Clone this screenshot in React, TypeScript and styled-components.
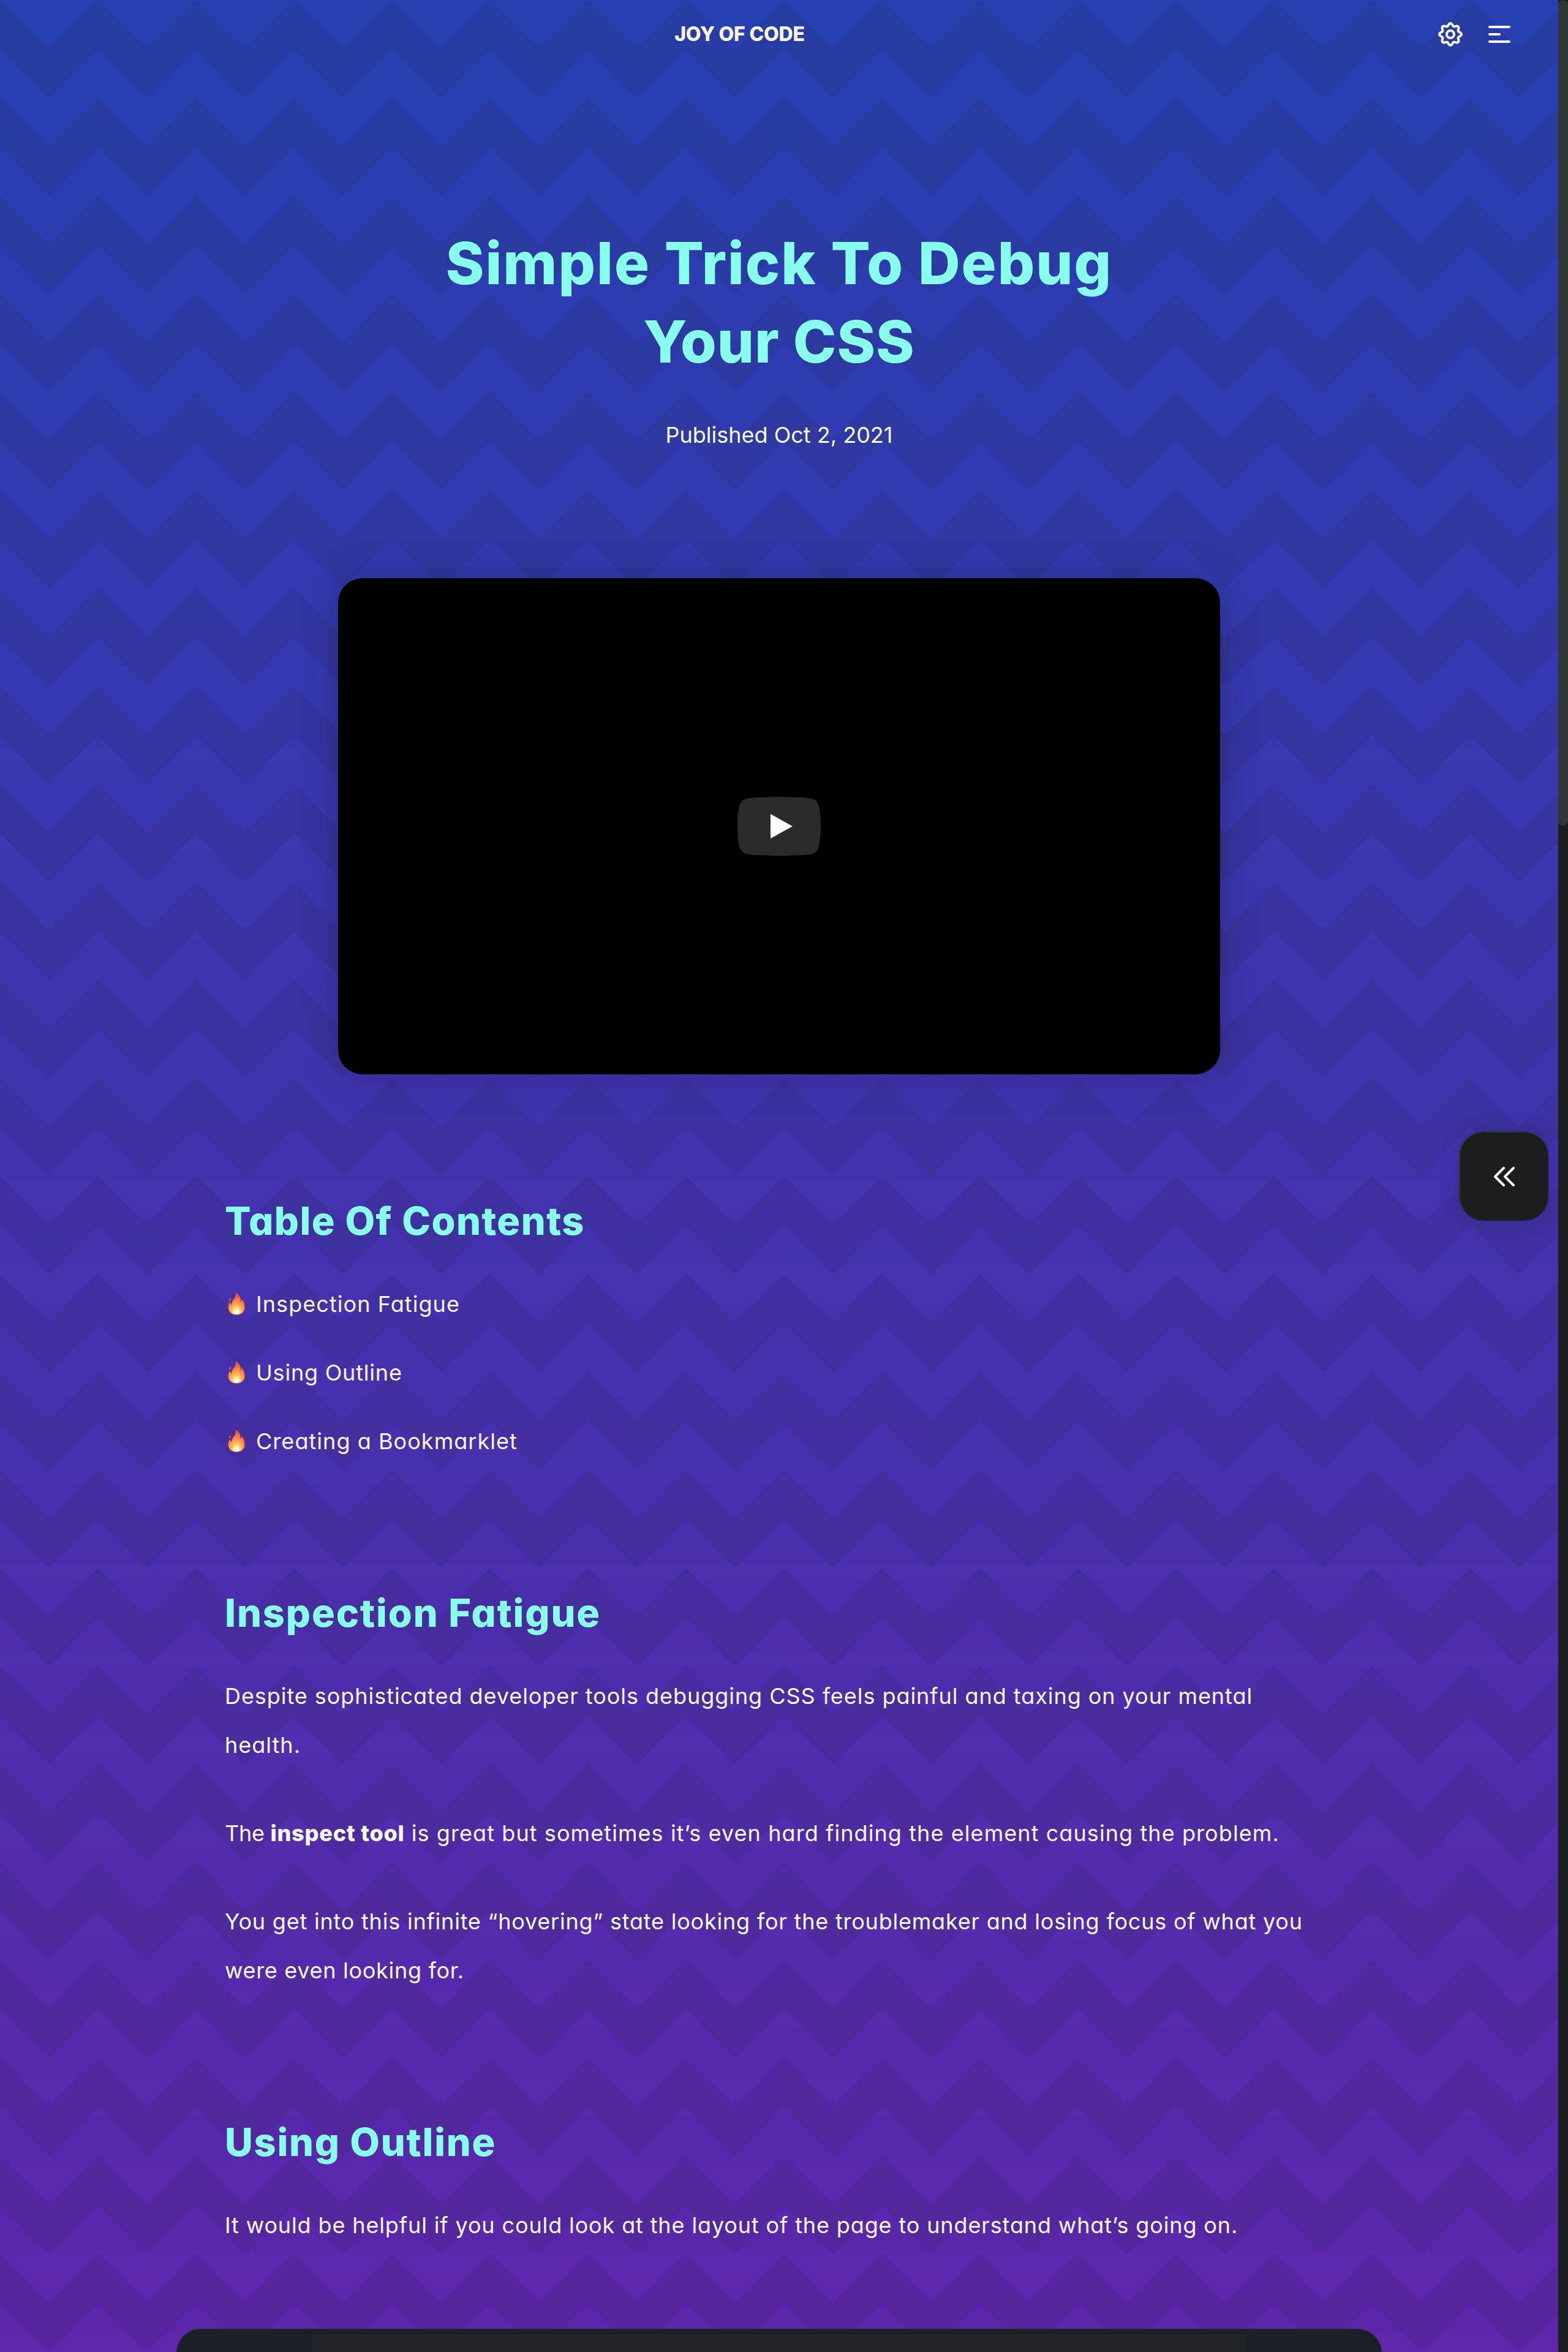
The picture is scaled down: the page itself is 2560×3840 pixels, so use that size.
import React from "react";
import styled, { createGlobalStyle } from "styled-components";

const colors = {
  text: "#fafafa",
  link: "#fff5f5",
  heading: "#88ffec",
  surface: "#1b1d1e",
  code: "#1b1f26",
};

const GlobalStyle = createGlobalStyle`
  *, *::before, *::after { box-sizing: border-box; }
  html, body { margin: 0; padding: 0; }
  body {
    width: 2560px;
    height: 3840px;
    overflow: hidden;
    font-family: Inter, "Open Sans", sans-serif;
    font-feature-settings: "cv11";
    color: ${colors.text};
  }
  h1, h2, p, ul { margin: 0; padding: 0; }
`;

const zigzag = encodeURIComponent(
  '<svg xmlns="http://www.w3.org/2000/svg" width="160" height="160"><path d="M0 0L80 80L160 0V80L80 160L0 80Z" fill="#1b1c1e" fill-opacity="0.1"/></svg>'
);

const Frame = styled.div`
  display: flex;
  width: 2560px;
  height: 3840px;
`;

const Page = styled.div`
  position: relative;
  flex: 1;
  display: flex;
  flex-direction: column;
  overflow: hidden;
  background:
    url("data:image/svg+xml,${zigzag}") 0 0 / 160px 160px,
    linear-gradient(180deg, #2640b1 0%, #5d26ab 100%);

  & > * {
    flex-shrink: 0;
  }
`;

const ScrollTrack = styled.div`
  width: 16px;
  background: ${colors.surface};
`;

const ScrollThumb = styled.div`
  height: 1348px;
  border-radius: 8px;
  background: #2f3736;
`;

const Header = styled.header`
  display: grid;
  grid-template-columns: 1fr auto 1fr;
  align-items: center;
  height: 112px;
  padding: 0 78px 0 0;
`;

const Brand = styled.a`
  grid-column: 2;
  margin-left: -51px;
  color: ${colors.link};
  font-size: 32px;
  font-weight: 800;
  line-height: 48px;
  letter-spacing: -0.2px;
  white-space: nowrap;
`;

const Actions = styled.div`
  display: flex;
  justify-content: flex-end;
  align-items: center;
  gap: 42px;
`;

const Icon = styled.svg`
  display: block;
  fill: none;
  stroke: ${colors.text};
  stroke-width: 4;
  stroke-linecap: round;
  stroke-linejoin: round;
`;

const Hero = styled.section`
  display: flex;
  flex-direction: column;
  align-items: center;
  padding-top: 254px;
  text-align: center;
`;

const Title = styled.h1`
  color: ${colors.heading};
  font-size: 95px;
  font-weight: 800;
  line-height: 128px;
`;

const Line = styled.span<{ $track?: number }>`
  display: block;
  letter-spacing: ${(p) => p.$track ?? 0}px;
  white-space: pre;
`;

const Published = styled.p`
  margin-top: 58px;
  font-size: 36px;
  line-height: 60px;
`;

const Video = styled.div`
  display: flex;
  align-items: center;
  justify-content: center;
  width: 1440px;
  height: 810px;
  margin: 204px auto 0;
  border-radius: 40px;
  background: #000;
  box-shadow: 0 0 64px rgba(0, 0, 0, 0.22);
`;

const Article = styled.main`
  width: 1810px;
  margin: 199px auto 0;
`;

const Section = styled.section`
  margin-bottom: 200px;
`;

const Heading = styled.h2<{ $track: number }>`
  margin-bottom: 56px;
  color: ${colors.heading};
  font-size: 63px;
  font-weight: 800;
  line-height: 80px;
  letter-spacing: ${(p) => p.$track}px;
`;

const Contents = styled.ul`
  display: flex;
  flex-direction: column;
  gap: 32px;
  list-style: none;
`;

const ContentsItem = styled.li`
  display: flex;
  align-items: center;
  gap: 18px;
  color: ${colors.link};
  font-size: 36px;
  line-height: 80px;
`;

const Flame = styled.svg`
  display: block;
  margin-left: 5px;
  margin-bottom: 2px;
`;

const Paragraph = styled.p`
  font-size: 36px;
  line-height: 80px;

  & + & {
    margin-top: 64px;
  }
`;

const Strong = styled.strong`
  font-weight: 800;
  letter-spacing: 0.8px;
`;

const Span = styled.span<{ $track: number }>`
  letter-spacing: ${(p) => p.$track}px;
`;

const CodeBlock = styled.div`
  height: 400px;
  margin: 129px -79px 0;
  border-top: 2px solid #212529;
  border-radius: 40px 40px 0 0;
  background: ${colors.code};
`;

const Toggle = styled.button`
  position: absolute;
  top: 1847px;
  right: 16px;
  display: flex;
  align-items: center;
  justify-content: center;
  width: 146px;
  height: 146px;
  padding: 0;
  border: 0 solid #303233;
  border-width: 2px 0 0 2px;
  border-radius: 40px;
  background: ${colors.surface};
  box-shadow: 0 0 32px rgba(0, 0, 0, 0.15);
`;

function gearPath() {
  const points: string[] = [];
  for (let i = 0; i < 144; i++) {
    const a = (i / 144) * Math.PI * 2;
    const r = 15.9 + 2.1 * Math.cos(a * 8);
    points.push(`${(20 + r * Math.cos(a)).toFixed(2)} ${(20 + r * Math.sin(a)).toFixed(2)}`);
  }
  return `M${points.join("L")}Z`;
}

const GearIcon = () => (
  <Icon width="40" height="40" viewBox="0 0 40 40">
    <path d={gearPath()} />
    <circle cx="20" cy="20" r="6" />
  </Icon>
);

const MenuIcon = () => (
  <Icon width="36" height="28" viewBox="0 0 36 28">
    <path d="M2 2H34M2 14H18M2 26H34" />
  </Icon>
);

const ChevronsIcon = () => (
  <Icon width="34" height="32" viewBox="0 0 34 32">
    <path d="M16 2L2 16L16 30M32 2L18 16L32 30" />
  </Icon>
);

const PlayIcon = () => (
  <svg width="136" height="96" viewBox="0 0 68 48">
    <path
      d="M66.52 7.74c-.78-2.93-2.49-5.41-5.42-6.19C55.79.13 34 0 34 0S12.21.13 6.9 1.55c-2.93.78-4.63 3.26-5.42 6.19C.06 13.05 0 24 0 24s.06 10.95 1.48 16.26c.78 2.93 2.49 5.41 5.42 6.19C12.21 47.87 34 48 34 48s21.79-.13 27.1-1.55c2.93-.78 4.64-3.26 5.42-6.19C67.94 34.95 68 24 68 24s-.06-10.95-1.48-16.26z"
      fill="#2b2b2b"
    />
    <path d="M45 24L27 14v20" fill="#fff" />
  </svg>
);

const FireIcon = () => (
  <Flame width="28" height="37" viewBox="0 0 28 37">
    <defs>
      <radialGradient id="flame" cx="0.5" cy="0.88" r="0.8">
        <stop offset="0" stopColor="#fffde0" />
        <stop offset="0.15" stopColor="#fff3a0" />
        <stop offset="0.34" stopColor="#fbc25e" />
        <stop offset="0.6" stopColor="#f68f4a" />
        <stop offset="1" stopColor="#ec5430" />
      </radialGradient>
    </defs>
    <path
      d="M13.2 0.5C17 3 21.5 8 20.6 15C22 14.2 22.6 12.6 22.7 11.2C25.4 14.4 27.6 19 27.4 25C27 32.5 21.5 36.5 14 36.5C6.5 36.5 1 32 0.7 25C0.6 21.5 1.8 18.5 3.4 16.2C4 18.5 4.8 19.6 6 20.2C6 15.5 8.5 13 11 9.5C13 6.5 13.7 3.500 13.200 0.500Z"
      fill="url(#flame)"
      stroke="#e8512f"
      strokeWidth="1"
      strokeOpacity="0.75"
    />
    <path d="M5 9C5.3 11.5 4.8 13 2.4 15C1.6 12.5 2.7 10.5 5 9Z" fill="#ee6240" />
    <ellipse cx="14" cy="32" rx="5.5" ry="3.8" fill="#fffff0" fillOpacity="0.6" />
  </Flame>
);

const links = [
  { label: "Inspection Fatigue", track: 1.07 },
  { label: "Using Outline", track: 0.8 },
  { label: "Creating a Bookmarklet", track: 1.05 },
];

export default function App() {
  return (
    <>
      <GlobalStyle />
      <Frame>
        <Page>
          <Header>
            <Brand>JOY OF CODE</Brand>
            <Actions>
              <GearIcon />
              <MenuIcon />
            </Actions>
          </Header>

          <Hero>
            <Title>
              <Line $track={2}>Simple Trick To Debug</Line>
              <Line $track={1}>Your CSS</Line>
            </Title>
            <Published>Published Oct 2, 2021</Published>
          </Hero>

          <Video>
            <PlayIcon />
          </Video>

          <Article>
            <Section>
              <Heading $track={1.48}>Table Of Contents</Heading>
              <Contents>
                {links.map((link) => (
                  <ContentsItem key={link.label}>
                    <FireIcon />
                    <Span $track={link.track}>{link.label}</Span>
                  </ContentsItem>
                ))}
              </Contents>
            </Section>

            <Section>
              <Heading $track={1.9}>Inspection Fatigue</Heading>
              <Paragraph>
                <Line $track={0.95}>
                  Despite sophisticated developer tools debugging CSS feels painful and taxing on your mental
                </Line>
                <Line $track={1}>health.</Line>
              </Paragraph>
              <Paragraph>
                <Span $track={-0.3}>The </Span>
                <Strong>inspect tool</Strong>
                <Span $track={1.08}>
                  {" is great but sometimes it’s even hard finding the element causing the problem."}
                </Span>
              </Paragraph>
              <Paragraph>
                <Line $track={0.79}>
                  You get into this infinite “hovering” state looking for the troublemaker and losing focus of what you
                </Line>
                <Line $track={0.7}>were even looking for.</Line>
              </Paragraph>
            </Section>

            <Section>
              <Heading $track={1.75}>Using Outline</Heading>
              <Paragraph>
                <Line $track={0.87}>
                  It would be helpful if you could look at the layout of the page to understand what’s going on.
                </Line>
              </Paragraph>
              <CodeBlock />
            </Section>
          </Article>

          <Toggle aria-label="Open sidebar">
            <ChevronsIcon />
          </Toggle>
        </Page>
        <ScrollTrack>
          <ScrollThumb />
        </ScrollTrack>
      </Frame>
    </>
  );
}
